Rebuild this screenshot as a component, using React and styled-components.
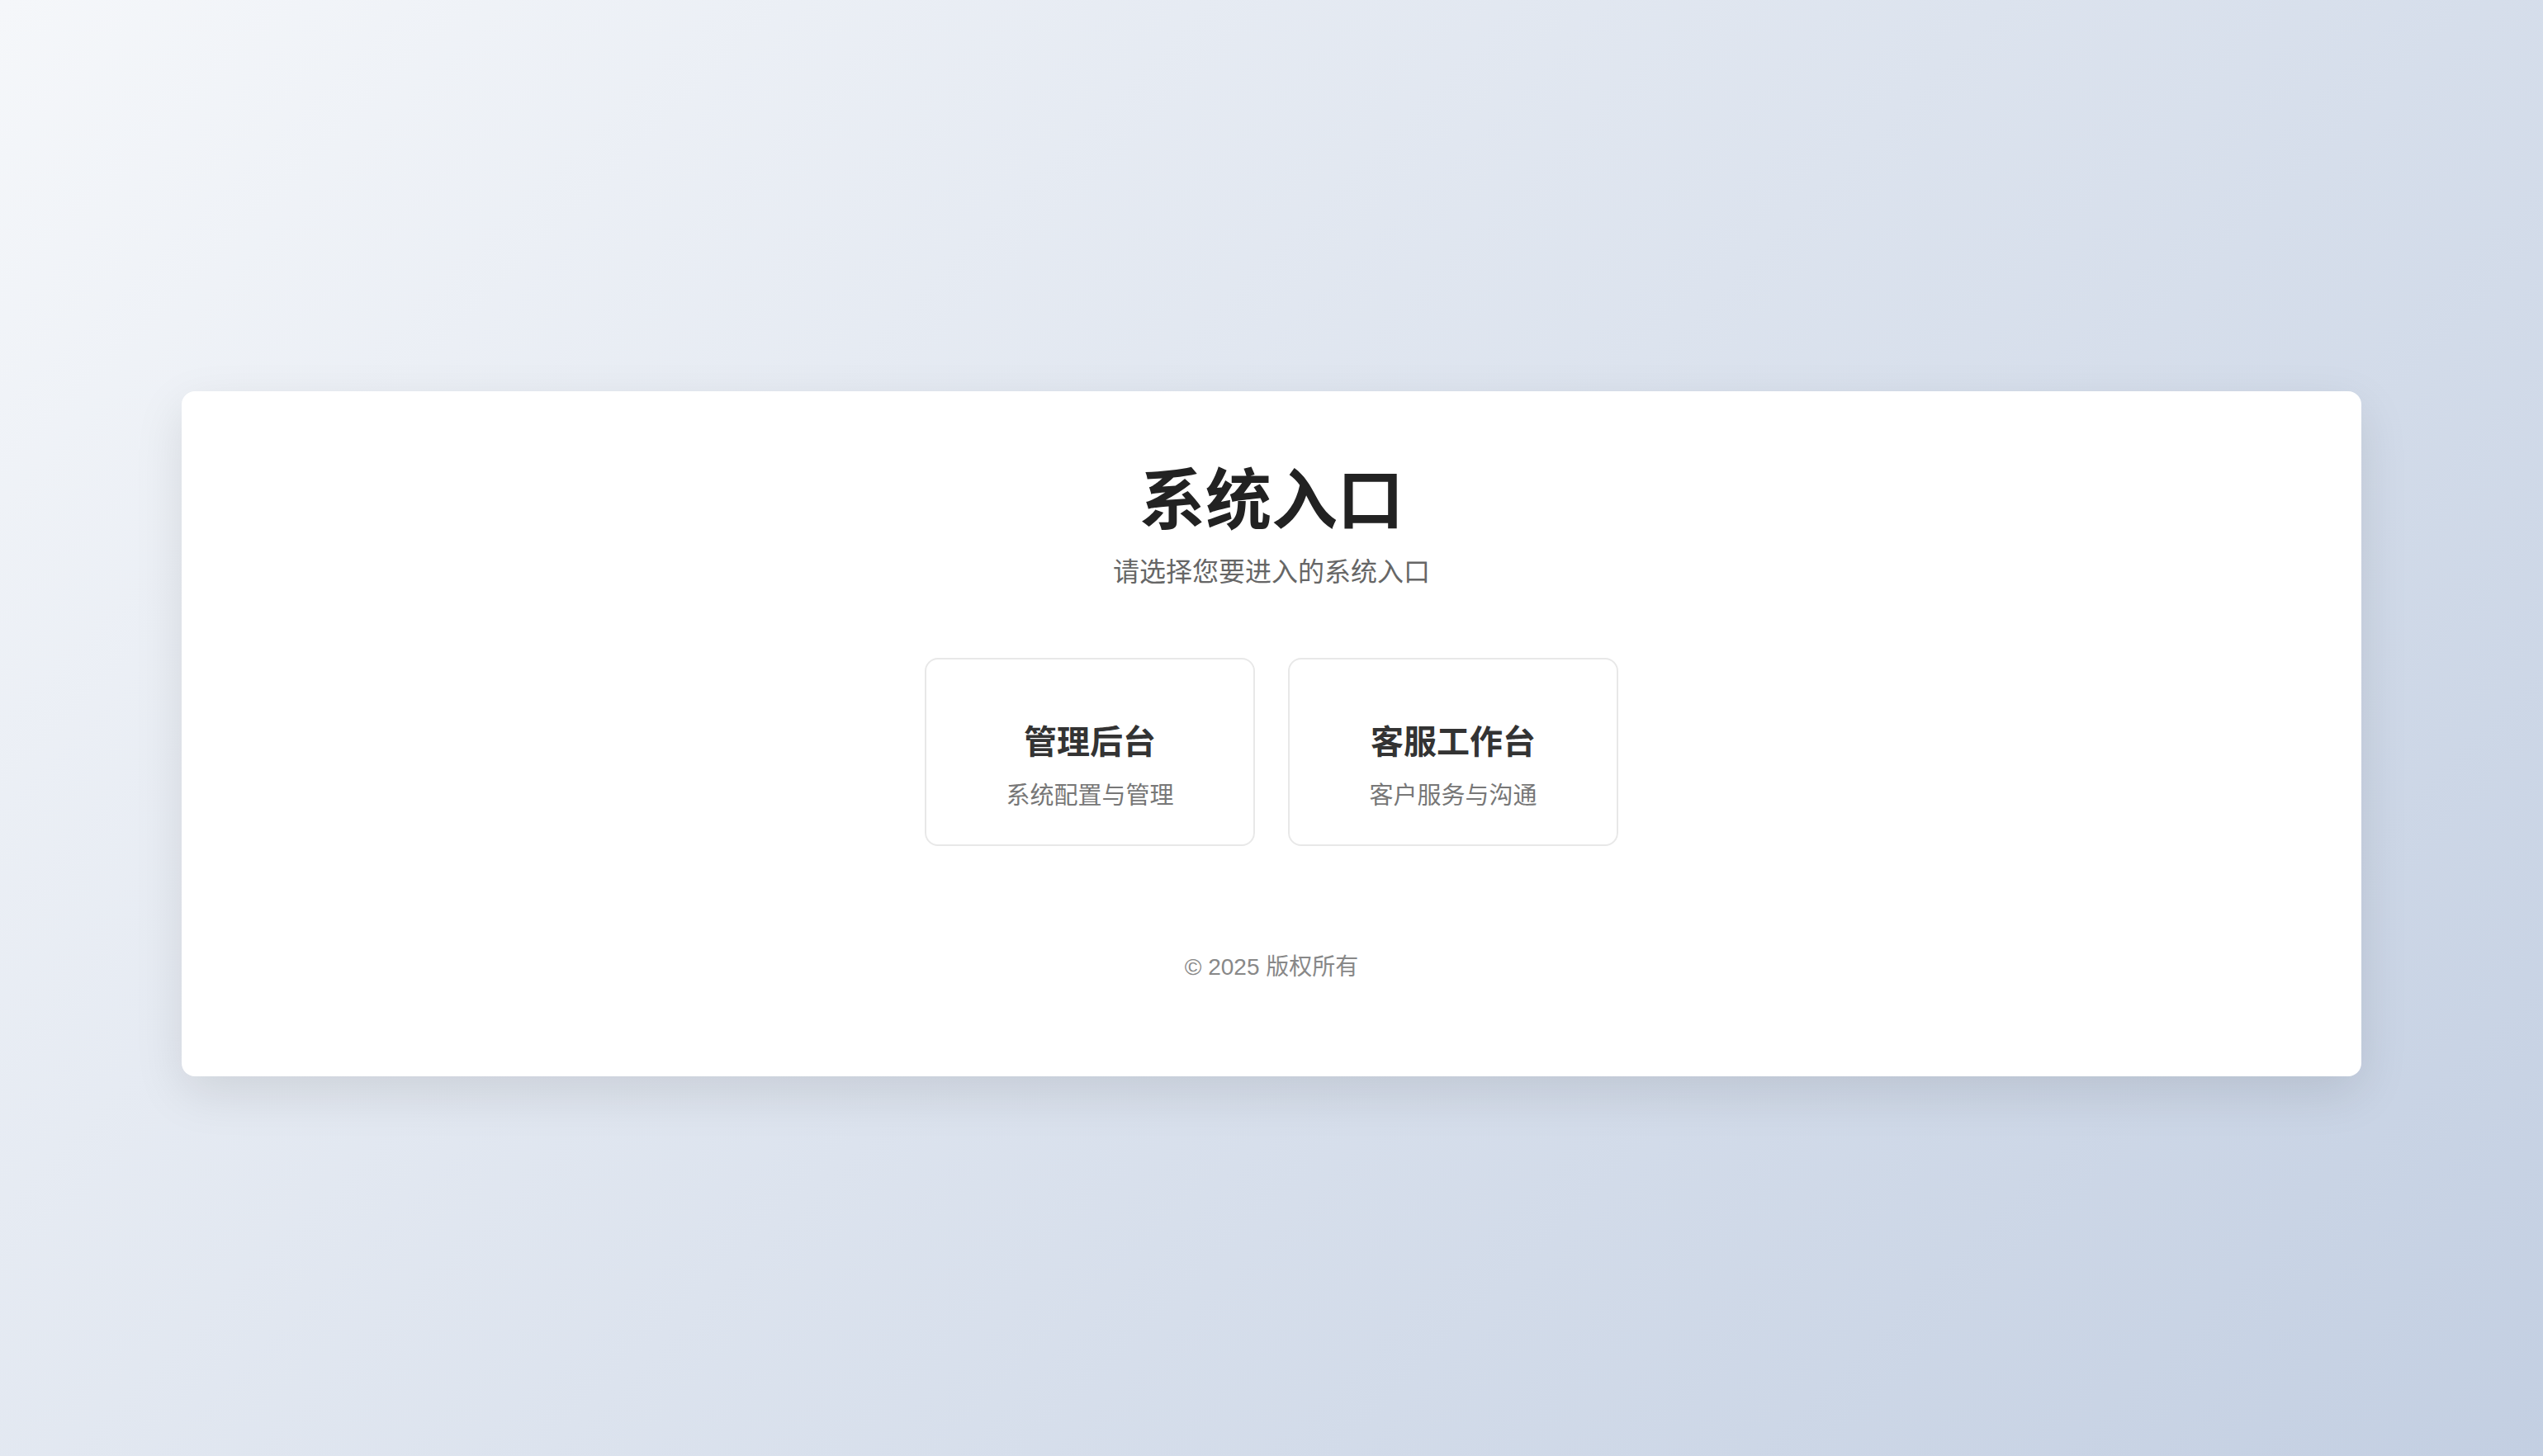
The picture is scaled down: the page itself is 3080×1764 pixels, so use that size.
import React from "react"
import styled, { createGlobalStyle } from "styled-components"

const GlobalStyle = createGlobalStyle`
  * {
    box-sizing: border-box;
  }
  html, body {
    margin: 0;
    padding: 0;
  }
  body {
    font-family: "Liberation Sans", "Noto Sans CJK SC", sans-serif;
    background: linear-gradient(135deg, #f5f7fa 0%, #c3cfe2 100%);
    min-height: 100vh;
  }
`

const Page = styled.div`
  min-height: 100vh;
  display: flex;
  align-items: center;
  justify-content: center;
  padding: 14px 220px 0;
`

const Panel = styled.main`
  width: 2640px;
  background: #ffffff;
  border-radius: 16px;
  box-shadow: 0 20px 60px rgba(0, 0, 0, 0.1);
  padding: 85px 40px 111px;
  display: flex;
  flex-direction: column;
  align-items: center;
  text-align: center;
`

const Title = styled.h1`
  margin: 0;
  font-size: 80px;
  line-height: 96px;
  font-weight: 700;
  color: #222;
`

const Subtitle = styled.p`
  margin: 14px 0 0;
  font-size: 32px;
  line-height: 48px;
  color: #666;
`

const EntryList = styled.div`
  margin-top: 80px;
  display: flex;
  gap: 40px;
  justify-content: center;
`

const EntryCard = styled.a`
  width: 400px;
  height: 228px;
  border: 2px solid #e8e8e8;
  border-radius: 16px;
  background: #fff;
  padding: 72px 20px 0;
  display: flex;
  flex-direction: column;
  align-items: center;
  text-decoration: none;
  cursor: pointer;
`

const EntryName = styled.h3`
  margin: 0;
  font-size: 40px;
  line-height: 56px;
  font-weight: 700;
  color: #333;
`

const EntryDesc = styled.p`
  margin: 16px 0 0;
  font-size: 29px;
  line-height: 42px;
  color: #777;
`

const Footer = styled.footer`
  margin-top: 126px;
  font-size: 28px;
  line-height: 42px;
  color: #888;
`

const entries = [
  { name: "管理后台", desc: "系统配置与管理", href: "#admin" },
  { name: "客服工作台", desc: "客户服务与沟通", href: "#service" },
]

const App = () => (
  <>
    <GlobalStyle />
    <Page>
      <Panel>
        <Title>系统入口</Title>
        <Subtitle>请选择您要进入的系统入口</Subtitle>
        <EntryList>
          {entries.map(({ name, desc, href }) => (
            <EntryCard key={name} href={href}>
              <EntryName>{name}</EntryName>
              <EntryDesc>{desc}</EntryDesc>
            </EntryCard>
          ))}
        </EntryList>
        <Footer>© 2025 版权所有</Footer>
      </Panel>
    </Page>
  </>
)

export default App
